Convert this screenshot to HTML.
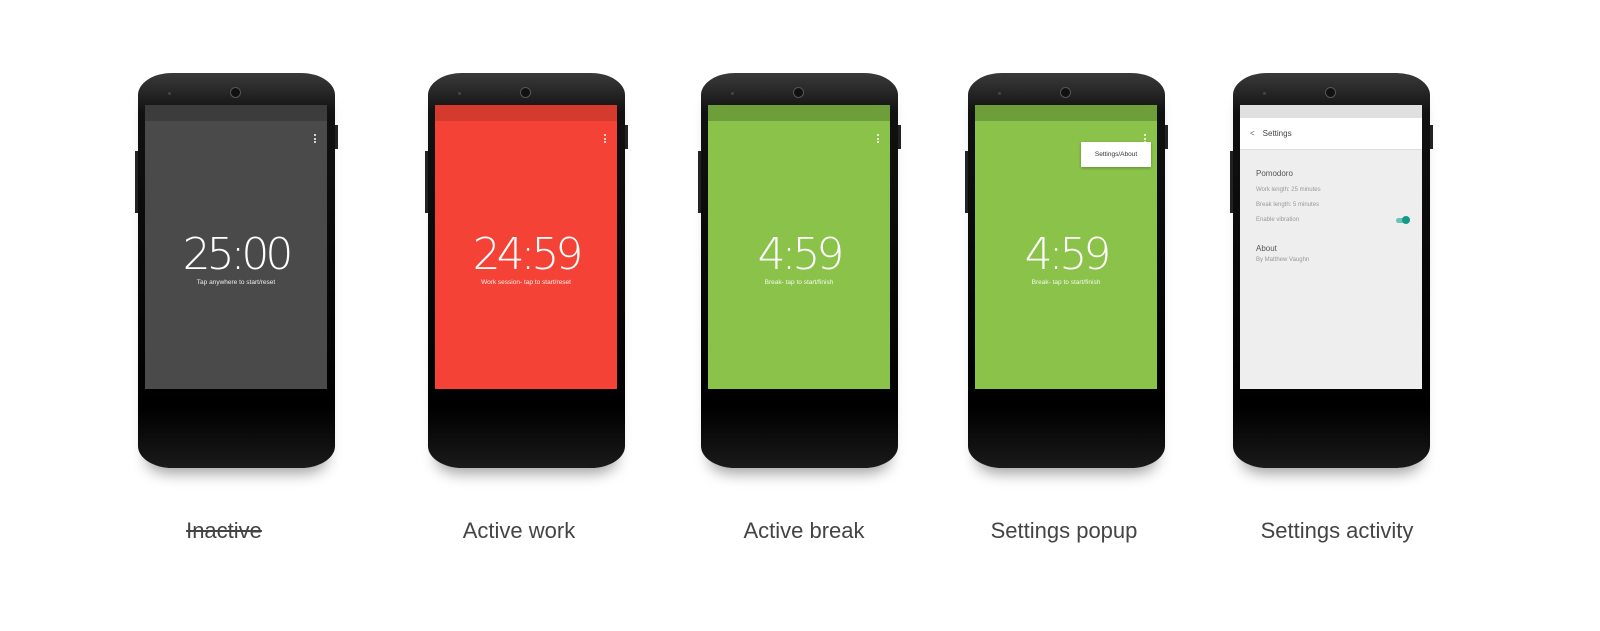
<!DOCTYPE html><html><head><style>
body{margin:0;width:1600px;height:631px;background:#fff;position:relative;overflow:hidden;font-family:"Liberation Sans",sans-serif}
.ph{position:absolute;top:73px;width:197px;height:395px;border-radius:34px/22px;background:linear-gradient(#3a3a3a,#111 10%,#000 85%,#1a1a1a);box-shadow:0 14px 14px -8px rgba(0,0,0,.35)}
.cam{position:absolute;top:14px;left:92px;width:9px;height:9px;border-radius:50%;border:1px solid #555;background:#111}
.dot{position:absolute;top:19px;left:30px;width:3px;height:3px;border-radius:50%;background:#444}
.btn{position:absolute;background:#222;width:3px}
.sc{position:absolute;top:32px;left:7px;width:182px;height:284px;overflow:hidden}
.sb{height:16px}
.t{position:absolute;top:124px;width:100%;text-align:center;color:#fff;font-family:"DejaVu Sans ExtraLight","DejaVu Sans",sans-serif;font-size:44px;font-weight:200;letter-spacing:-4px}
.s{position:absolute;top:174px;width:100%;text-align:center;color:#fff;font-size:6.5px;opacity:.9}
.m{position:absolute;top:29px;right:11px;width:2px}
.m i{display:block;width:2px;height:2px;background:#fff;margin-bottom:1.5px;border-radius:1px}
.lb{position:absolute;top:518px;font-size:22px;color:#444;transform:translateX(-50%);white-space:nowrap}
</style></head><body>
<div class="ph" style="left:138px"><div class="dot"></div><div class="cam"></div><div class="btn" style="left:-3px;top:78px;height:62px"></div><div class="btn" style="right:-3px;top:52px;height:24px"></div>
<div class="sc" style="background:#4a4a4a"><div class="sb" style="background:#3c3c3c"></div><div class="m"><i></i><i></i><i></i></div><div class="t">25:00</div><div class="s">Tap anywhere to start/reset</div></div></div>
<div class="ph" style="left:428px"><div class="dot"></div><div class="cam"></div><div class="btn" style="left:-3px;top:78px;height:62px"></div><div class="btn" style="right:-3px;top:52px;height:24px"></div>
<div class="sc" style="background:#f44336"><div class="sb" style="background:#d53a2f"></div><div class="m"><i></i><i></i><i></i></div><div class="t">24:59</div><div class="s">Work session- tap to start/reset</div></div></div>
<div class="ph" style="left:701px"><div class="dot"></div><div class="cam"></div><div class="btn" style="left:-3px;top:78px;height:62px"></div><div class="btn" style="right:-3px;top:52px;height:24px"></div>
<div class="sc" style="background:#8bc34a"><div class="sb" style="background:#6e9e3a"></div><div class="m"><i></i><i></i><i></i></div><div class="t">4:59</div><div class="s">Break- tap to start/finish</div></div></div>
<div class="ph" style="left:968px"><div class="dot"></div><div class="cam"></div><div class="btn" style="left:-3px;top:78px;height:62px"></div><div class="btn" style="right:-3px;top:52px;height:24px"></div>
<div class="sc" style="background:#8bc34a"><div class="sb" style="background:#6e9e3a"></div><div class="m"><i></i><i></i><i></i></div>
<div style="position:absolute;top:37px;left:106px;width:70px;height:25px;background:#fff;font-size:6.5px;color:#333;line-height:25px;text-align:center;box-shadow:0 1px 3px rgba(0,0,0,.3)">Settings/About</div>
<div class="t">4:59</div><div class="s">Break- tap to start/finish</div></div></div>
<div class="ph" style="left:1233px"><div class="dot"></div><div class="cam"></div><div class="btn" style="left:-3px;top:78px;height:62px"></div><div class="btn" style="right:-3px;top:52px;height:24px"></div>
<div class="sc" style="background:#eeeeee;color:#555"><div style="height:13px;background:#e0e0e0"></div>
<div style="height:31px;background:#fff;border-bottom:1px solid #ddd;font-size:8px;line-height:31px;color:#444"><span style="margin:0 8px 0 10px;color:#666">&lt;</span>Settings</div>
<div style="position:absolute;top:64px;left:16px;font-size:8px;color:#555">Pomodoro</div>
<div style="position:absolute;top:82px;left:16px;font-size:6px;color:#999">Work length: 25 minutes</div>
<div style="position:absolute;top:97px;left:16px;font-size:6px;color:#999">Break length: 5 minutes</div>
<div style="position:absolute;top:112px;left:16px;font-size:6px;color:#999">Enable vibration</div>
<div style="position:absolute;top:113px;left:156px;width:12px;height:5px;border-radius:3px;background:#6cc3b5"></div>
<div style="position:absolute;top:111px;left:162px;width:8px;height:8px;border-radius:50%;background:#129a87"></div>
<div style="position:absolute;top:139px;left:16px;font-size:8px;color:#555">About</div>
<div style="position:absolute;top:152px;left:16px;font-size:6px;color:#999">By Matthew Vaughn</div>
</div></div>
<div class="lb" style="left:224px;text-decoration:line-through">Inactive</div>
<div class="lb" style="left:519px">Active work</div>
<div class="lb" style="left:804px">Active break</div>
<div class="lb" style="left:1064px">Settings popup</div>
<div class="lb" style="left:1337px">Settings activity</div>
</body></html>
